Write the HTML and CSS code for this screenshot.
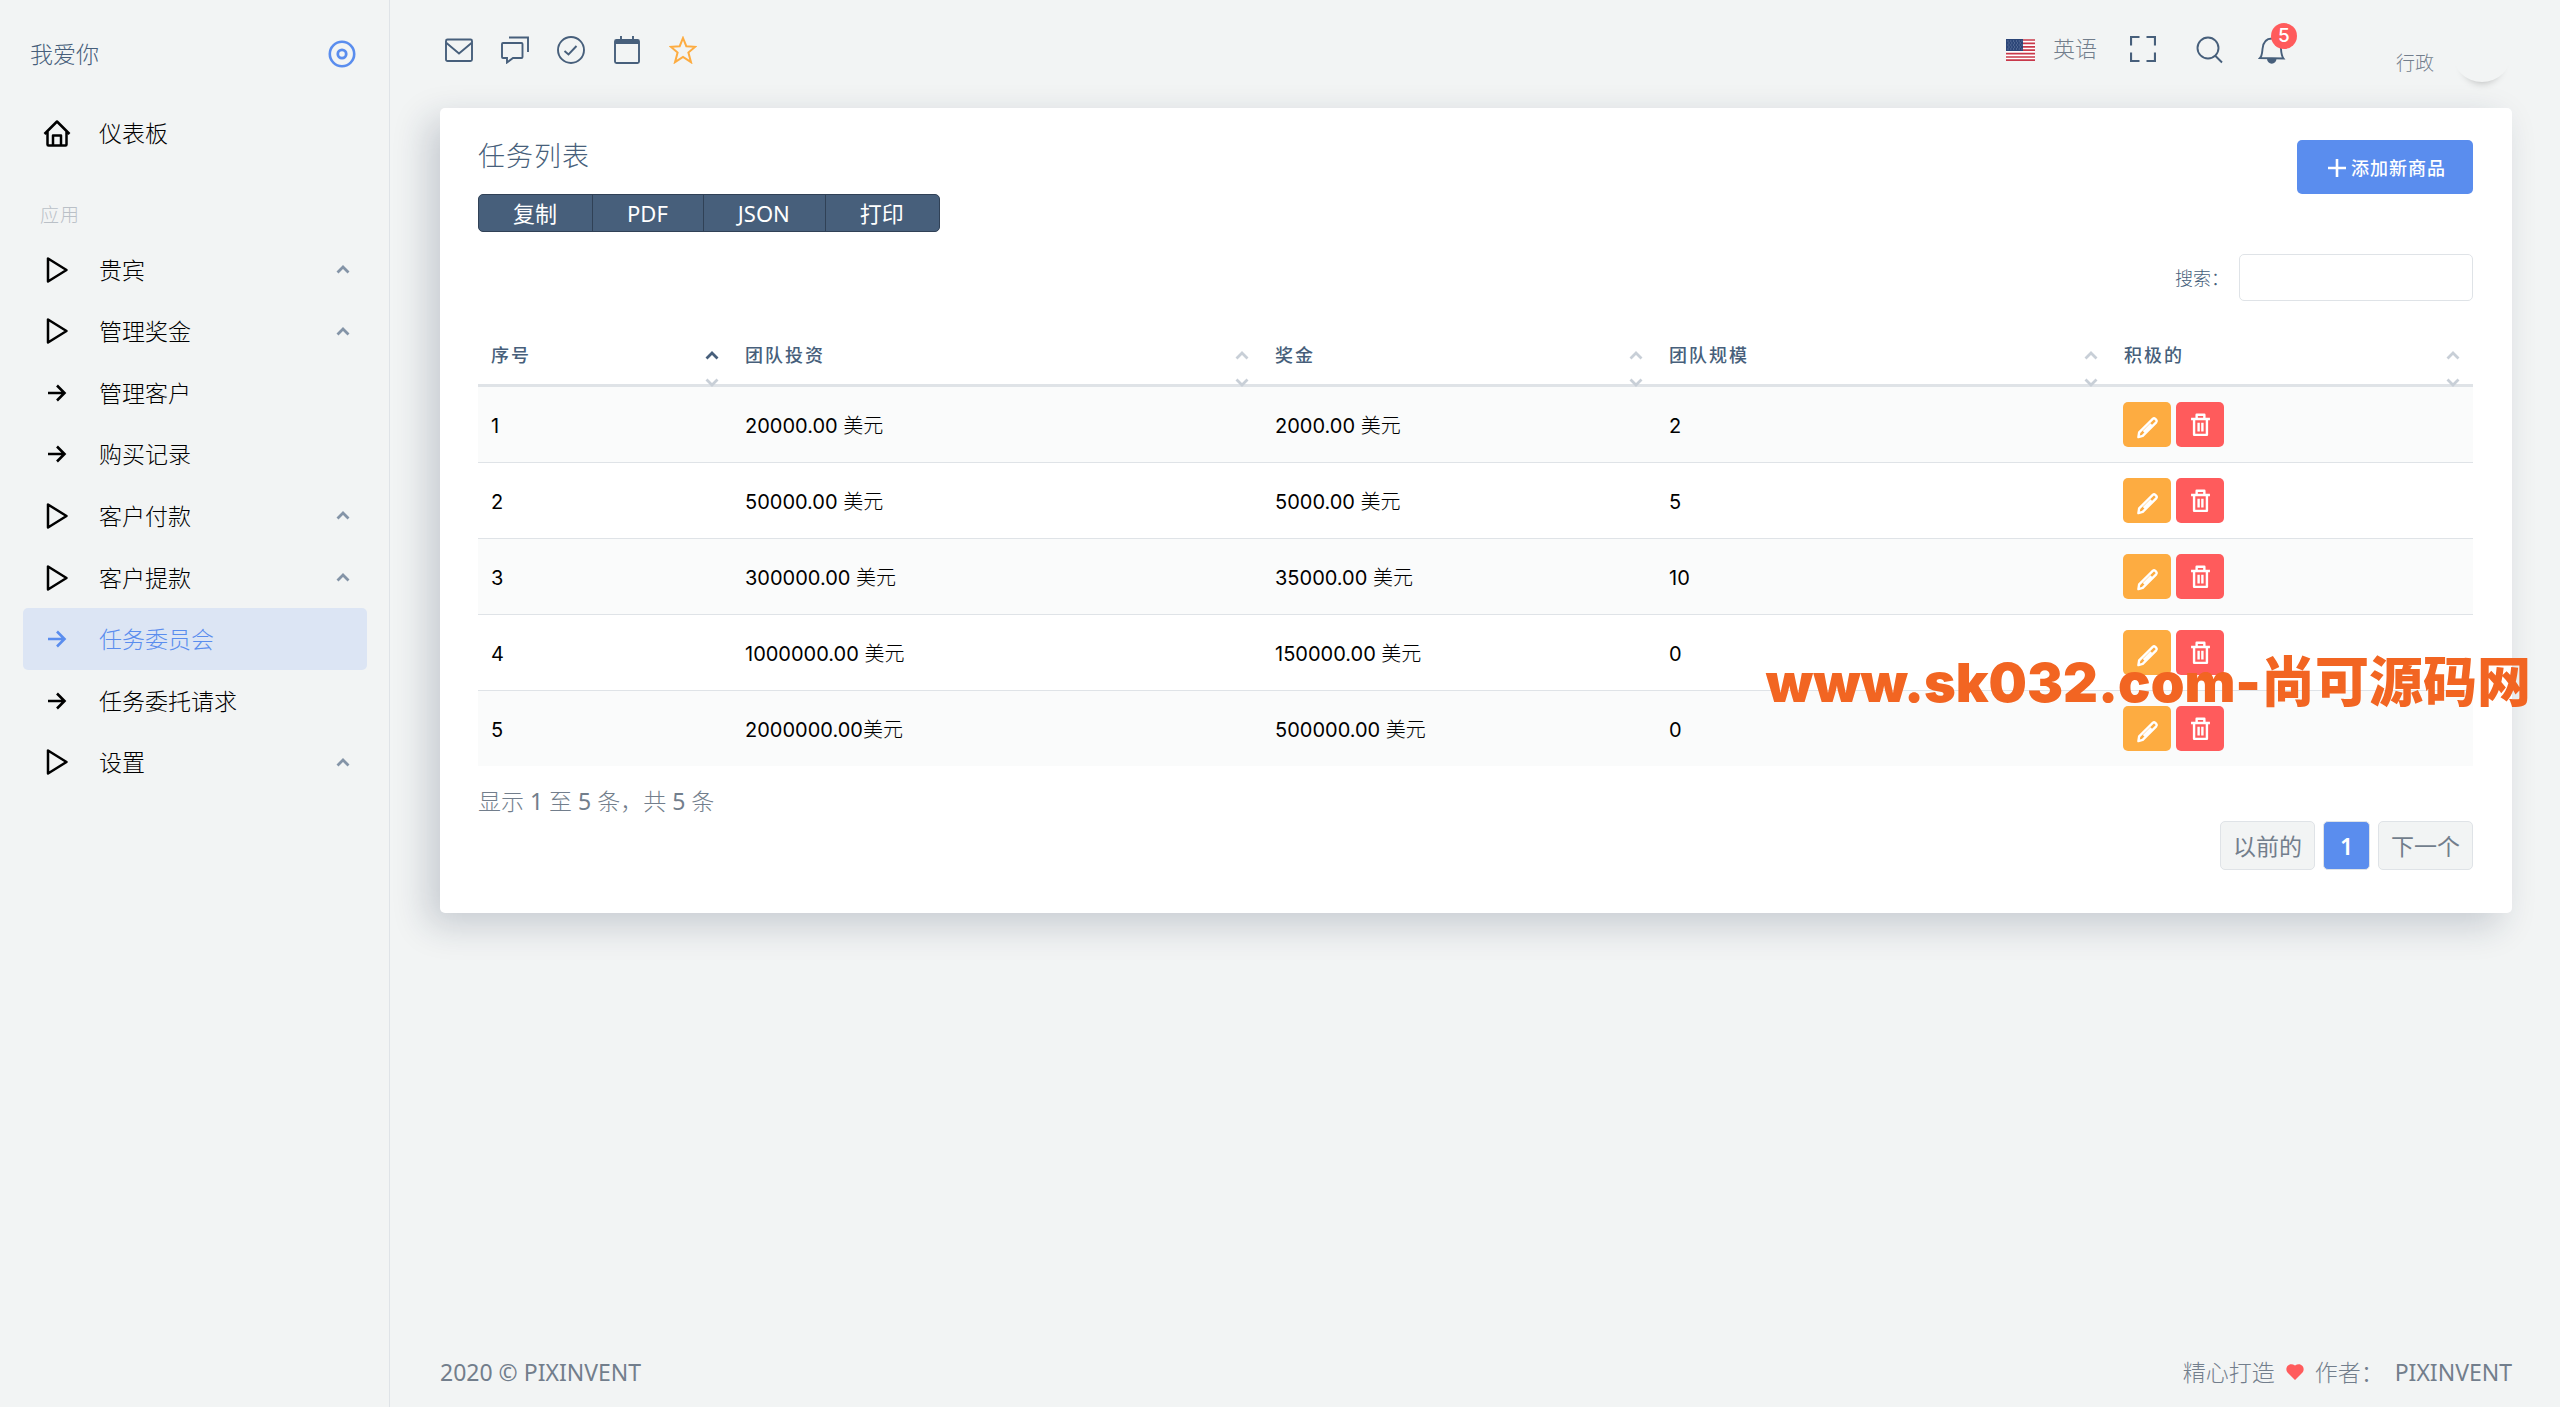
FILE: index.html
```html
<!DOCTYPE html>
<html lang="zh-CN">
<head>
<meta charset="utf-8">
<title>任务列表</title>
<link rel="stylesheet" href="styles.css">
</head>
<body>
<svg class="sprite" aria-hidden="true">
  <symbol id="i-play" viewBox="0 0 28 28"><path d="M5 2.500v23L23.500 14z" fill="none" stroke="currentColor" stroke-width="2.500" stroke-linejoin="round"/></symbol>
  <symbol id="i-arrow" viewBox="0 0 28 28"><path d="M5 14h16M14 6.500 21.500 14 14 21.500" fill="none" stroke="currentColor" stroke-width="2.600"/></symbol>
  <symbol id="i-home" viewBox="0 0 28 28"><path d="M1.500 15 14 2.500 26.500 15M4.500 12.500V25.500a1 1 0 0 0 1 1h17a1 1 0 0 0 1-1V12.500M10 26V16.500h8V26" fill="none" stroke="currentColor" stroke-width="2.500" stroke-linejoin="round"/></symbol>
  <symbol id="i-up" viewBox="0 0 14 9"><path d="M1.500 7.500 7 2l5.500 5.500" fill="none" stroke="currentColor" stroke-width="2.800"/></symbol>
  <symbol id="i-down" viewBox="0 0 14 9"><path d="M1.500 1.500 7 7l5.500-5.500" fill="none" stroke="currentColor" stroke-width="2.800"/></symbol>
  <symbol id="i-pencil" viewBox="0 0 24 24"><path d="M2.500 22l.8-5L17.500 3a2 2 0 0 1 2.600 0l1 1a2 2 0 0 1 0 2.600L7 20.800zM8 16.500 16 8.500" fill="none" stroke="currentColor" stroke-width="2.500" stroke-linejoin="round"/></symbol>
  <symbol id="i-trash" viewBox="0 0 24 28"><path d="M1 7h22M4.500 7v18.500h15V7M7.500 6.500V2h9v4.500M9.800 11.500v10M14.200 11.500v10" fill="none" stroke="currentColor" stroke-width="2.800" stroke-linejoin="round"/></symbol>
</svg>
<div class="app">
  <aside class="sidebar">
    <div class="brand">
      <a href="#" class="brand-name">我爱你</a>
      <button class="icon-btn toggle" aria-label="折叠菜单"><svg width="28" height="28" viewBox="0 0 28 28" fill="none" stroke="currentColor"><circle cx="14" cy="14" r="12.200" stroke-width="2.600"/><circle cx="14" cy="14" r="4.200" stroke-width="2.800"/></svg></button>
    </div>
    <nav>
      <a href="#" class="nav-item home"><svg class="nav-icon"><use href="#i-home"/></svg><span>仪表板</span></a>
      <h2 class="nav-heading">应用</h2>
      <div class="nav-list">
        <a href="#" class="nav-item"><svg class="nav-icon"><use href="#i-play"/></svg><span>贵宾</span><svg class="chev"><use href="#i-up"/></svg></a>
        <a href="#" class="nav-item"><svg class="nav-icon"><use href="#i-play"/></svg><span>管理奖金</span><svg class="chev"><use href="#i-up"/></svg></a>
        <a href="#" class="nav-item"><svg class="nav-icon"><use href="#i-arrow"/></svg><span>管理客户</span></a>
        <a href="#" class="nav-item"><svg class="nav-icon"><use href="#i-arrow"/></svg><span>购买记录</span></a>
        <a href="#" class="nav-item"><svg class="nav-icon"><use href="#i-play"/></svg><span>客户付款</span><svg class="chev"><use href="#i-up"/></svg></a>
        <a href="#" class="nav-item"><svg class="nav-icon"><use href="#i-play"/></svg><span>客户提款</span><svg class="chev"><use href="#i-up"/></svg></a>
        <a href="#" class="nav-item active"><svg class="nav-icon"><use href="#i-arrow"/></svg><span>任务委员会</span></a>
        <a href="#" class="nav-item"><svg class="nav-icon"><use href="#i-arrow"/></svg><span>任务委托请求</span></a>
        <a href="#" class="nav-item"><svg class="nav-icon"><use href="#i-play"/></svg><span>设置</span><svg class="chev"><use href="#i-up"/></svg></a>
      </div>
    </nav>
  </aside>

  <div class="main">
    <header class="topbar">
      <div class="shortcuts">
        <a href="#" aria-label="邮件"><svg width="28" height="28" viewBox="0 0 28 28" fill="none" stroke="currentColor" stroke-width="1.900"><rect x="1" y="3.500" width="26" height="21.500" rx="1.500"/><path d="M1.500 7 14 17.500 26.500 7"/></svg></a>
        <a href="#" aria-label="聊天"><svg width="28" height="28" viewBox="0 0 28 28" fill="none" stroke="currentColor" stroke-width="1.900"><path d="M2 7h18.500a1 1 0 0 1 1 1v13a1 1 0 0 1-1 1H12l-6 4.500V22H2a1 1 0 0 1-1-1V8a1 1 0 0 1 1-1zM8 1.500h19V16"/></svg></a>
        <a href="#" aria-label="待办"><svg width="28" height="28" viewBox="0 0 28 28" fill="none" stroke="currentColor" stroke-width="1.900"><circle cx="14" cy="14" r="13"/><path d="M7.500 15 11.500 18.500 19.500 10"/></svg></a>
        <a href="#" aria-label="日历"><svg width="28" height="28" viewBox="0 0 28 28" fill="none" stroke="currentColor" stroke-width="1.900"><rect x="2" y="4" width="24" height="23" rx="1.500"/><path d="M2 6h24" stroke-width="4"/><path d="M8 0v5M20 0v5"/></svg></a>
        <a href="#" aria-label="收藏" class="star"><svg width="28" height="28" viewBox="0 0 28 28" fill="none" stroke="currentColor" stroke-width="2"><path d="M14 2l3.300 8.200 8.900.6-6.800 5.700 2.600 9.700L14 21l-8 5.200 2.600-9.700-6.800-5.700 8.900-.6z"/></svg></a>
      </div>
      <div class="tools">
        <a href="#" class="lang"><svg width="29" height="22" viewBox="0 0 29 22"><path fill="#fff" d="M0 0h29v22H0z"/><path d="M0 1h29M0 4.400h29M0 7.800h29M0 11.200h29M0 14.600h29M0 18h29M0 21.200h29" stroke="#c8384a" stroke-width="1.700"/><path fill="#2b4577" d="M0 0h17v12H0z"/><path d="M1.500 2h15M2.500 4h14M1.500 6h15M2.500 8h14M1.500 10h15" stroke="#8496b8" stroke-width=".9" stroke-dasharray="1 1.800"/></svg><span>英语</span></a>
        <button class="icon-btn" aria-label="全屏"><svg width="26" height="26" viewBox="0 0 26 26" fill="none" stroke="currentColor" stroke-width="2.200"><path d="M1 9.500V1h8.500M16.500 1H25v8.500M25 16.500V25h-8.500M9.500 25H1v-8.500"/></svg></button>
        <button class="icon-btn search-btn" aria-label="搜索"><svg width="28" height="28" viewBox="0 0 28 28" fill="none" stroke="currentColor" stroke-width="1.900"><circle cx="12" cy="12" r="10.500"/><path d="M19 19.500 26 26.500"/></svg></button>
        <button class="icon-btn bell" aria-label="通知"><svg width="28" height="28" viewBox="0 0 28 28" fill="none" stroke="currentColor" stroke-width="1.900"><path d="M2 22c2-2 2-4 2.500-9C5 7 8 2.500 14 2.500S22.500 7 23 13c.3 5 .6 7 2.500 9.500z"/><path d="M10 23h7.500a3.700 3.700 0 0 1-7.500 0z" fill="currentColor"/></svg><span class="badge">5</span></button>
        <a href="#" class="user"><span>行政</span><span class="avatar"></span></a>
      </div>
    </header>

    <main class="card">
      <div class="card-head">
        <div>
          <h1>任务列表</h1>
          <div class="btn-group"><button>复制</button><button>PDF</button><button>JSON</button><button>打印</button></div>
        </div>
        <button class="add"><svg width="18" height="18" viewBox="0 0 18 18" stroke="currentColor" stroke-width="2.600"><path d="M9 0v18M0 9h18"/></svg>添加新商品</button>
      </div>
      <div class="filter"><label for="q">搜索：</label><input id="q" type="search"></div>
      <table>
        <colgroup><col class="c1"><col class="c2"><col class="c3"><col class="c4"><col class="c5"></colgroup>
        <thead><tr>
          <th><div class="th">序号<span class="sort asc"><svg><use href="#i-up"/></svg><svg><use href="#i-down"/></svg></span></div></th>
          <th><div class="th">团队投资<span class="sort"><svg><use href="#i-up"/></svg><svg><use href="#i-down"/></svg></span></div></th>
          <th><div class="th">奖金<span class="sort"><svg><use href="#i-up"/></svg><svg><use href="#i-down"/></svg></span></div></th>
          <th><div class="th">团队规模<span class="sort"><svg><use href="#i-up"/></svg><svg><use href="#i-down"/></svg></span></div></th>
          <th><div class="th">积极的<span class="sort"><svg><use href="#i-up"/></svg><svg><use href="#i-down"/></svg></span></div></th>
        </tr></thead>
        <tbody>
          <tr><td>1</td><td>20000.00 美元</td><td>2000.00 美元</td><td>2</td><td><div class="acts"><button class="edit" aria-label="编辑"><svg><use href="#i-pencil"/></svg></button><button class="del" aria-label="删除"><svg><use href="#i-trash"/></svg></button></div></td></tr>
          <tr><td>2</td><td>50000.00 美元</td><td>5000.00 美元</td><td>5</td><td><div class="acts"><button class="edit" aria-label="编辑"><svg><use href="#i-pencil"/></svg></button><button class="del" aria-label="删除"><svg><use href="#i-trash"/></svg></button></div></td></tr>
          <tr><td>3</td><td>300000.00 美元</td><td>35000.00 美元</td><td>10</td><td><div class="acts"><button class="edit" aria-label="编辑"><svg><use href="#i-pencil"/></svg></button><button class="del" aria-label="删除"><svg><use href="#i-trash"/></svg></button></div></td></tr>
          <tr><td>4</td><td>1000000.00 美元</td><td>150000.00 美元</td><td>0</td><td><div class="acts"><button class="edit" aria-label="编辑"><svg><use href="#i-pencil"/></svg></button><button class="del" aria-label="删除"><svg><use href="#i-trash"/></svg></button></div></td></tr>
          <tr><td>5</td><td>2000000.00美元</td><td>500000.00 美元</td><td>0</td><td><div class="acts"><button class="edit" aria-label="编辑"><svg><use href="#i-pencil"/></svg></button><button class="del" aria-label="删除"><svg><use href="#i-trash"/></svg></button></div></td></tr>
        </tbody>
      </table>
      <p class="info">显示 1 至 5 条，共 5 条</p>
      <div class="pages"><button>以前的</button><button class="current">1</button><button>下一个</button></div>
    </main>

    <footer>
      <span>2020 © PIXINVENT</span>
      <span class="made">精心打造<svg width="18" height="16" viewBox="0 0 18 16"><path fill="#ff5b5c" d="M9 16 1.500 8.500C-2 4 3-2.500 9 1.500c6-4 11 2.500 7.500 7z"/></svg>作者：<a href="#">PIXINVENT</a></span>
    </footer>
  </div>
</div>
<div class="watermark">www.sk032.com-尚可源码网</div>
</body>
</html>
```

FILE: styles.css
```css
* { box-sizing: border-box; }
body {
  margin: 0;
  background: #f2f4f4;
  color: #727e8c;
  font: 400 23px/34px "Noto Sans", "Noto Sans CJK SC Light", "Noto Sans CJK SC", sans-serif;
}
a { color: inherit; text-decoration: none; }
button { font: inherit; color: inherit; border: 0; background: none; padding: 0; cursor: pointer; }
svg { display: block; flex: none; }
h1, h2, p { margin: 0; font-weight: inherit; }
.sprite { position: absolute; width: 0; height: 0; }
.app { display: flex; min-height: 100vh; }

.sidebar { flex: none; width: 390px; border-right: 1px solid #dfe3e7; padding: 37px 22px 0 23px; font-weight: 300; }
.brand { display: flex; align-items: center; justify-content: space-between; padding: 0 11px 0 7px; height: 34px; color: #475f7b; }
.toggle { color: #5a8dee; }
.nav-item { display: flex; align-items: center; padding: 0 17px 0 20px; color: #000; border-radius: 5px; }
.nav-icon { width: 28px; height: 28px; margin-right: 28px; }
.nav-item.home { height: 62px; margin-top: 31px; }
.nav-heading { font-size: 19px; letter-spacing: 1px; color: #bac0c7; padding-left: 17px; line-height: 28px; margin: 37px 0 10px; }
.nav-list { display: grid; grid-auto-rows: 1fr; height: 554px; }
.nav-item.active { background: #dce5f4; color: #5a8dee; }
.chev { width: 14px; height: 9px; margin-left: auto; color: #8494a7; }

.main { flex: 1; min-width: 0; display: flex; flex-direction: column; padding: 0 48px 0 50px; }
.topbar { height: 108px; padding: 22px 0 26px 5px; display: flex; justify-content: space-between; color: #475f7b; }
.shortcuts { display: flex; gap: 28px; padding-top: 14px; }
.star { color: #fdac41; }
.tools { display: flex; align-items: flex-start; }
.lang { display: flex; align-items: flex-start; gap: 18px; margin: 9px 33px 0 0; color: #727e8c; font-size: 22px; font-weight: 300; }
.lang svg { margin-top: 8px; }
.icon-btn { display: block; position: relative; }
.tools .icon-btn { margin-top: 14px; }
.tools .search-btn { margin-left: 40px; }
.tools .bell { margin-left: 34px; }
.badge { position: absolute; left: 13px; top: -13px; width: 26px; height: 26px; border-radius: 50%; background: #ff5b5c; color: #fff; font: 500 19px/26px Inter, sans-serif; text-align: center; }
.user { display: flex; margin-left: 110px; gap: 18px; font-size: 19px; font-weight: 300; }
.user span:first-child { padding-top: 24px; color: #727e8c; }
.avatar { width: 60px; height: 60px; border-radius: 50%; background: #f2f4f4; box-shadow: 0 12px 8px -12px rgba(0, 0, 0, .3); }

.card { background: #fff; border-radius: 5px; box-shadow: -12px 12px 36px 0 rgba(25, 42, 70, .2); padding: 31px 39px 42px 38px; }
.card-head { display: flex; justify-content: space-between; align-items: flex-start; }
h1 { font-size: 27px; font-weight: 300; letter-spacing: 1px; color: #475f7b; line-height: 34px; margin-bottom: 21px; }
.btn-group, .add, th, .pages { font-family: "Noto Sans", "Noto Sans CJK SC", sans-serif; }
.btn-group { display: flex; height: 38px; border: 1px solid #304156; border-radius: 5px; background: #475f7b; color: #fff; font-weight: 400; font-size: 22px; line-height: 36px; }
.btn-group button { padding: 0 35px 0 34px; }
.btn-group button + button { border-left: 1px solid #304156; }
.add { display: flex; align-items: center; gap: 5px; height: 54px; margin-top: 1px; padding: 2px 27px 0 31px; border-radius: 5px; background: #5a8dee; color: #fff; font-size: 18px; font-weight: 500; letter-spacing: 1px; }
.filter { display: flex; justify-content: flex-end; align-items: center; gap: 10px; margin-top: 22px; font-size: 18px; color: #475f7b; }
.filter label { font-weight: 300; }
.filter input { width: 234px; height: 47px; border: 1px solid #dfe3e7; border-radius: 5px; background: #fff; font: inherit; padding: 0 12px; }
table { width: 100%; table-layout: fixed; border-collapse: separate; border-spacing: 0; margin-top: 21px; }
.c1 { width: 254px; }
.c2 { width: 530px; }
.c3 { width: 394px; }
.c4 { width: 455px; }
.c5 { width: 362px; }
th { text-align: left; vertical-align: top; font-size: 18px; font-weight: 500; letter-spacing: 2px; color: #475f7b; padding: 20px 13px 0; height: 65px; border-bottom: 3px solid #dfe3e7; }
.th { display: flex; justify-content: space-between; align-items: flex-start; line-height: 26px; height: 36px; }
.sort { display: grid; gap: 18px; padding-top: 9px; color: #c8cfd7; }
.sort svg { width: 14px; height: 9px; }
.sort.asc svg:first-child { color: #475f7b; }
td { height: 76px; padding: 2px 13px 0; color: #000; font-family: Inter, "Noto Sans CJK SC Light", "Noto Sans CJK SC", sans-serif; font-size: 20px; border-top: 1px solid #dfe3e7; }
td:last-child { padding: 0 12px; }
tbody tr:first-child td { border-top: 0; height: 75px; }
tbody tr:nth-child(odd) { background: #fafbfb; }
.acts { display: flex; gap: 5px; }
.acts button { display: grid; place-items: center; width: 48px; height: 45px; border-radius: 5px; color: #fff; }
.edit { background: #fdac41; }
.del { background: #ff5b5c; }
.edit svg { width: 23px; height: 23px; margin-top: 5px; }
.del svg { width: 21px; height: 24px; }
.info { margin-top: 18px; line-height: 34px; }
.pages { display: flex; justify-content: flex-end; gap: 8px; margin-top: 3px; margin-bottom: 1px; }
.pages button { height: 49px; padding: 0 12px; border: 1px solid #dfe3e7; border-radius: 5px; background: #f2f4f4; font-weight: 400; }
.pages .current { width: 47px; background: #5a8dee; color: #fff; font-weight: 600; }

footer { margin-top: auto; display: flex; justify-content: space-between; align-items: center; height: 70px; }
.made { display: flex; align-items: center; gap: 11px; }

.watermark { position: absolute; right: 29px; top: 647px; font: 900 54px/72px Inter, "Noto Sans CJK SC", sans-serif; color: #f26522; white-space: nowrap; }
```
